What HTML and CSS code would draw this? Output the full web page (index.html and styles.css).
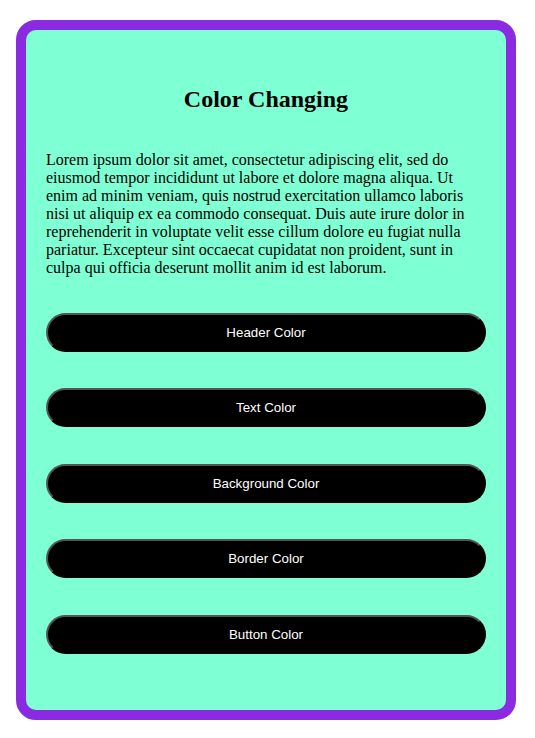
FILE: index.html
```html
<!DOCTYPE html>
<html lang="en">
<head>
<meta charset="utf-8">
<title>Color Changing</title>
<link rel="stylesheet" href="styles.css">
</head>
<body>
<div class="card">
  <h2 class="title">Color Changing</h2>
  <p class="text">Lorem ipsum dolor sit amet, consectetur adipiscing elit, sed do eiusmod tempor incididunt ut labore et dolore magna aliqua. Ut enim ad minim veniam, quis nostrud exercitation ullamco laboris nisi ut aliquip ex ea commodo consequat. Duis aute irure dolor in reprehenderit in voluptate velit esse cillum dolore eu fugiat nulla pariatur. Excepteur sint occaecat cupidatat non proident, sunt in culpa qui officia deserunt mollit anim id est laborum.</p>
  <div class="buttons">
    <button class="btn">Header Color</button>
    <button class="btn">Text Color</button>
    <button class="btn">Background Color</button>
    <button class="btn">Border Color</button>
    <button class="btn">Button Color</button>
  </div>
</div>
</body>
</html>
```
FILE: styles.css
```css
html, body {
  margin: 0;
  padding: 0;
  background: #ffffff;
}
body {
  font-family: "Liberation Serif", "Times New Roman", serif;
  font-size: 16px;
  color: #000;
}
.card {
  box-sizing: border-box;
  width: 500px;
  margin: 20px 0 0 16px;
  border: 10px solid #8a2be2;
  border-radius: 20px;
  background: #7fffd4;
  padding: 20px 20px 56px;
}
.title {
  font-size: 24px;
  font-weight: bold;
  text-align: center;
  margin: 36px 0 38px;
}
.text {
  margin: 0 0 36px;
  line-height: normal;
}
.buttons {
  display: flex;
  flex-direction: column;
  gap: 36.4px;
}
.btn {
  display: block;
  width: 100%;
  box-sizing: border-box;
  padding: 10px;
  border: 2px outset #000;
  border-radius: 20px;
  background: #000;
  color: #fff;
  font-family: "Liberation Sans", Arial, sans-serif;
  font-size: 13.333px;
  line-height: normal;
}
```
